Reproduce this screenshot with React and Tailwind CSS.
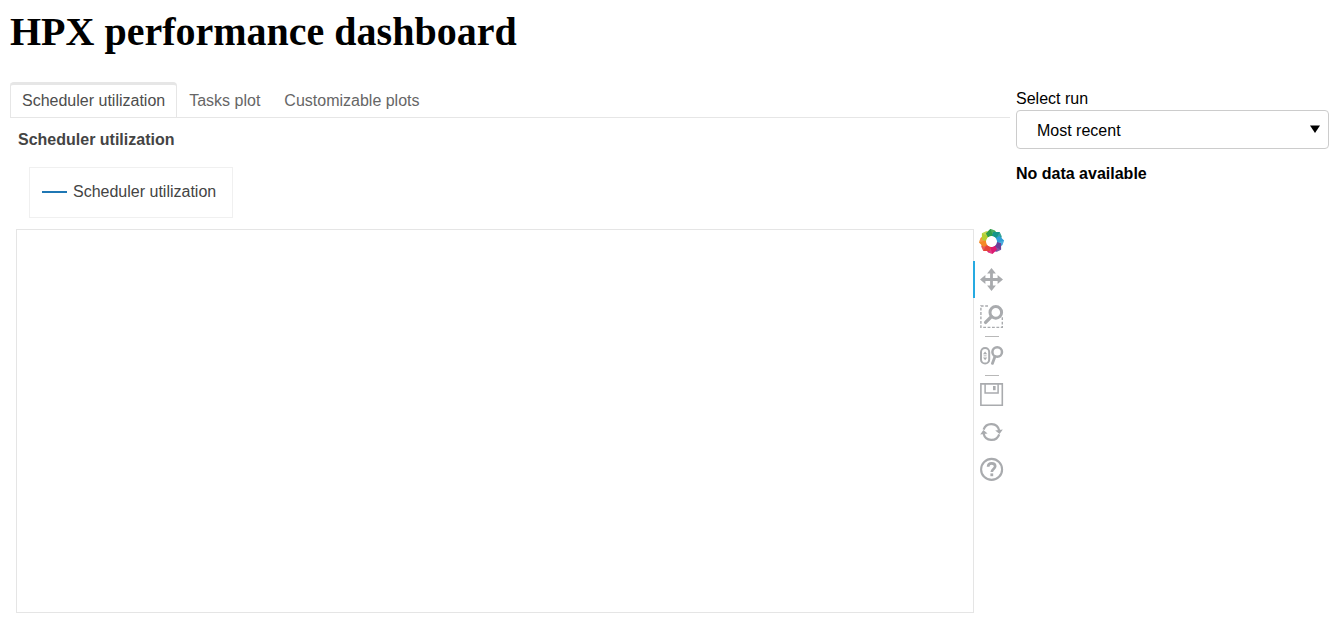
import { useState } from "react";

const PETALS = [
  ["#2f9e48", 0],
  ["#14968a", 45],
  ["#2f9fd8", 90],
  ["#6a3f98", 135],
  ["#dc1a72", 180],
  ["#e5443a", 225],
  ["#f58a26", 270],
  ["#b5cf30", 315],
];

function BokehLogo() {
  return (
    <svg viewBox="-12.5 -12.5 26 26" className="block size-[26px]" aria-hidden="true">
      {PETALS.map(([color, angle]) => (
        <g key={angle} transform={`rotate(${angle})`}>
          <path d="M-5.6-8 L-1-12.6 L3.4-11 L6-7.4 L3.8-4.2 L0-5.4 L-3.6-4.2Z" fill={color} />
          <path d="M-1-12.6 L3.4-11 L1-6.4Z" fill="#fff" fillOpacity="0.14" />
        </g>
      ))}
      <path d="M-5.6-8 L-1-12.6 L0-5.4 L-3.6-4.2Z" fill="#2f9e48" />
      <circle r="5.4" fill="#fff" />
    </svg>
  );
}

function Glyph({ children }) {
  return (
    <svg viewBox="0 0 24 24" className="block size-6" fill="none" stroke="#a9abae" aria-hidden="true">
      {children}
    </svg>
  );
}

function PanIcon() {
  return (
    <Glyph>
      <path d="M11.5 4v15M4 11.5h15" strokeWidth="2.8" />
      <path
        d="M11.5 0l4.4 5.4H7.1zM11.5 23l4.4-5.4H7.1zM0 11.5l5.4-4.4v8.8zM23 11.5l-5.4-4.4v8.8z"
        fill="#a9abae"
        stroke="none"
      />
    </Glyph>
  );
}

function BoxZoomIcon() {
  return (
    <Glyph>
      <path d="M8 1H.9v21.4h21.4V12" strokeWidth="1.4" strokeDasharray="2.8 1.6" />
      <circle cx="15.8" cy="7.4" r="5.8" strokeWidth="3" />
      <path d="M11.4 11.6L5.6 17.4" strokeWidth="3.4" strokeLinecap="round" />
    </Glyph>
  );
}

function WheelZoomIcon() {
  return (
    <Glyph>
      <rect x="1" y="4" width="8.2" height="15.6" rx="4.1" strokeWidth="2" />
      <path d="M5.1 7.4l2.1 2.8H3zM5.1 16.2l2.1-2.8H3z" fill="#a9abae" stroke="none" />
      <path d="M3.6 11.8h3" strokeWidth="0.8" />
      <circle cx="17.2" cy="8" r="4.8" strokeWidth="2.5" />
      <path d="M15 12.6l-2.6 6.8" strokeWidth="2.8" strokeLinecap="round" />
    </Glyph>
  );
}

function SaveIcon() {
  return (
    <Glyph>
      <path d="M.9.9h21.4v21.4H.9z" strokeWidth="1.6" />
      <path d="M5.1.9v9h13V.9" strokeWidth="1.5" />
      <path d="M13 3h2.6v4.2H13z" fill="#a9abae" stroke="none" />
    </Glyph>
  );
}

function ResetIcon() {
  return (
    <Glyph>
      <path d="M3.6 9.6A8.1 8.1 0 0 1 19.2 10.5M19.2 14.4A8.1 8.1 0 0 1 3.6 13.5" strokeWidth="2.2" />
      <path d="M15.2 10.4l7.6-1-3.2 4.6zM7.6 13.6l-7.4 1 3.2-4.6z" fill="#a9abae" stroke="none" />
    </Glyph>
  );
}

function HelpIcon() {
  return (
    <Glyph>
      <circle cx="11.6" cy="12.4" r="10.5" strokeWidth="2.1" />
      <path d="M8.1 9.8c0-2.3 1.5-3.5 3.6-3.5s3.5 1.2 3.5 3c0 2.6-3.4 2.7-3.4 5.6" strokeWidth="2.7" />
      <path d="M10.4 16.4h2.8v2.8h-2.8z" fill="#a9abae" stroke="none" />
    </Glyph>
  );
}

function ToolButton({ label, active, children }) {
  return (
    <button
      type="button"
      aria-label={label}
      title={label}
      className={`flex h-[37px] w-full items-center border-l-2 pl-[5px] ${
        active ? "border-[#26aae1]" : "border-transparent"
      }`}
    >
      {children}
    </button>
  );
}

function Divider() {
  return (
    <div className="flex h-0.5 justify-center">
      <span className="mt-px h-px w-3.5 bg-[#b8b8b8]" />
    </div>
  );
}

function Toolbar() {
  return (
    <div className="relative -ml-px w-[37px] shrink-0" role="toolbar" aria-label="Plot tools">
      <a href="#bokeh" aria-label="Bokeh" className="flex h-8 pl-[6px]">
        <BokehLogo />
      </a>
      <ToolButton label="Pan" active>
        <PanIcon />
      </ToolButton>
      <ToolButton label="Box Zoom">
        <BoxZoomIcon />
      </ToolButton>
      <Divider />
      <ToolButton label="Wheel Zoom">
        <WheelZoomIcon />
      </ToolButton>
      <Divider />
      <ToolButton label="Save">
        <SaveIcon />
      </ToolButton>
      <ToolButton label="Reset">
        <ResetIcon />
      </ToolButton>
      <ToolButton label="Help">
        <HelpIcon />
      </ToolButton>
    </div>
  );
}

const TABS = ["Scheduler utilization", "Tasks plot", "Customizable plots"];

export default function App() {
  const [tab, setTab] = useState(TABS[0]);

  return (
    <div className="px-2.5 font-['Liberation_Sans',Arial,sans-serif] text-base text-black">
      <h1 className="pt-[9px] font-['Liberation_Serif','Times_New_Roman',serif] text-[40px] leading-[46px] font-bold">
        HPX performance dashboard
      </h1>

      <div className="mt-[27px] flex items-start gap-1.5">
        <main className="min-w-0 flex-1">
          <div role="tablist" className="flex h-9 border-b border-[#e6e6e6]">
            {TABS.map((name) => (
              <button
                key={name}
                type="button"
                role="tab"
                aria-selected={name === tab}
                onClick={() => setTab(name)}
                className={`rounded-t border border-t-[3px] border-b-0 px-[11px] whitespace-nowrap ${
                  name === tab
                    ? "border-[#e6e6e6] bg-white text-[#4d4d4d]"
                    : "border-transparent text-[#666666]"
                }`}
              >
                {name}
              </button>
            ))}
          </div>

          <section className="pl-1.5">
            <h2 className="pt-3 pl-0.5 leading-5 font-bold text-[#444444]">Scheduler utilization</h2>
            <div className="mt-[17px] ml-[13px] inline-flex h-[51px] items-center gap-1.5 border border-[#f0f0f0] pr-4 pb-0.5 pl-3 align-top text-[#444444]">
              <span className="h-0.5 w-[25px] bg-[#1f77b4]" />
              <span>Scheduler utilization</span>
            </div>
            <div className="mt-[11px] flex items-start">
              <div className="h-[384px] min-w-0 flex-1 border border-[#e5e5e5]" />
              <Toolbar />
            </div>
          </section>
        </main>

        <aside className="-mr-[3px] w-[313px] shrink-0 pt-1.5">
          <label htmlFor="run" className="block leading-[22px]">
            Select run
          </label>
          <div className="relative">
            <select
              id="run"
              className="block h-[39px] w-full appearance-none rounded border border-[#cccccc] bg-white px-5 pt-0.5 text-base"
            >
              <option>Most recent</option>
            </select>
            <svg
              viewBox="0 0 10 8"
              className="pointer-events-none absolute top-[15px] right-[9px] h-2 w-2.5"
              aria-hidden="true"
            >
              <path d="M0 .5h10L5 8z" />
            </svg>
          </div>
          <p className="mt-[15px] leading-5 font-bold">No data available</p>
        </aside>
      </div>
    </div>
  );
}
